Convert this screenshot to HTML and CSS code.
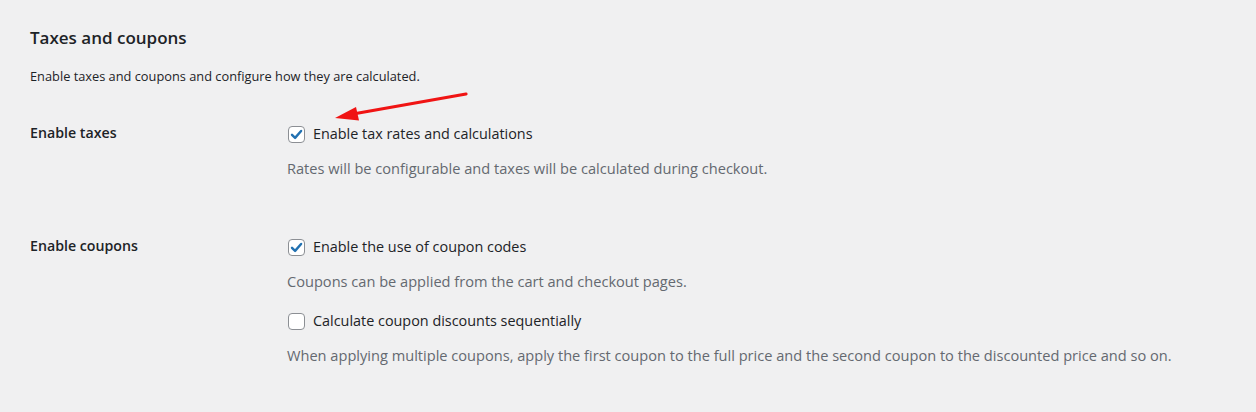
FILE: index.html
```html
<!DOCTYPE html>
<html lang="en">
<head>
    <meta charset="UTF-8">
    <title>Taxes and coupons</title>
    <link rel="stylesheet" href="styles.css">
</head>
<body>

<div class="settings-wrap">
    <h2 class="section-title">Taxes and coupons</h2>
    <p class="section-desc">Enable taxes and coupons and configure how they are calculated.</p>

    <div class="form-row">
        <div class="row-label">Enable taxes</div>
        <div class="row-field">
            <label class="check-line">
                <span class="checkbox checked">
                    <svg viewBox="0 0 17 17" width="17" height="17"><path d="M4 8.8 L7.1 11.9 L13.1 5" fill="none" stroke="#2271b1" stroke-width="2.4" stroke-linecap="round" stroke-linejoin="round"/></svg>
                </span>
                Enable tax rates and calculations
            </label>
            <p class="field-desc">Rates will be configurable and taxes will be calculated during checkout.</p>
        </div>
    </div>

    <div class="form-row">
        <div class="row-label">Enable coupons</div>
        <div class="row-field">
            <label class="check-line">
                <span class="checkbox checked">
                    <svg viewBox="0 0 17 17" width="17" height="17"><path d="M4 8.8 L7.1 11.9 L13.1 5" fill="none" stroke="#2271b1" stroke-width="2.4" stroke-linecap="round" stroke-linejoin="round"/></svg>
                </span>
                Enable the use of coupon codes
            </label>
            <p class="field-desc">Coupons can be applied from the cart and checkout pages.</p>
            <label class="check-line">
                <span class="checkbox"></span>
                Calculate coupon discounts sequentially
            </label>
            <p class="field-desc">When applying multiple coupons, apply the first coupon to the full price and the second coupon to the discounted price and so on.</p>
        </div>
    </div>

    <!-- annotation arrow drawn over the page -->
    <svg class="annotation" width="150" height="40" viewBox="0 0 150 40">
        <line x1="135" y1="4" x2="22" y2="24" stroke="#f01414" stroke-width="3.2" stroke-linecap="round"/>
        <polygon points="4,28 25,17 28,30.5" fill="#f01414"/>
    </svg>
</div>

</body>
</html>
```

FILE: styles.css
```css
body {
    margin: 0;
    background-color: #f0f0f1;
    color: #1d2327;
    font-family: "Open Sans", "Noto Sans", Arial, sans-serif;
    font-size: 14px;
}

.settings-wrap {
    position: relative;
    padding: 26px 30px 20px 30px;
}

.section-title {
    font-size: 17px;
    font-weight: 600;
    margin: 0;
    line-height: 24px;
}

.section-desc {
    font-size: 12.8px;
    margin: 17px 0 0 0;
    line-height: 18px;
}

.form-row {
    display: flex;
    margin-top: 39px;
}

.form-row + .form-row {
    margin-top: 39px;
}

.row-label {
    width: 257px;
    flex-shrink: 0;
    font-weight: 600;
    line-height: 18px;
    font-size: 14.2px;
}

.row-field {
    display: flex;
    flex-direction: column;
}

.check-line {
    display: flex;
    align-items: center;
    gap: 8px;
    line-height: 20px;
    font-size: 14.4px;
    margin-left: 1px;
}

.checkbox {
    width: 17px;
    height: 17px;
    box-sizing: border-box;
    border: 1px solid #8c8f94;
    border-radius: 4px;
    background: #fff;
    display: flex;
    align-items: center;
    justify-content: center;
}

.checkbox svg {
    display: block;
    margin: -1px;
}

.field-desc {
    margin: 14px 0 20px 0;
    color: #646970;
    font-size: 14.6px;
    line-height: 20px;
}

.annotation {
    position: absolute;
    left: 331px;
    top: 90px;
}
```
